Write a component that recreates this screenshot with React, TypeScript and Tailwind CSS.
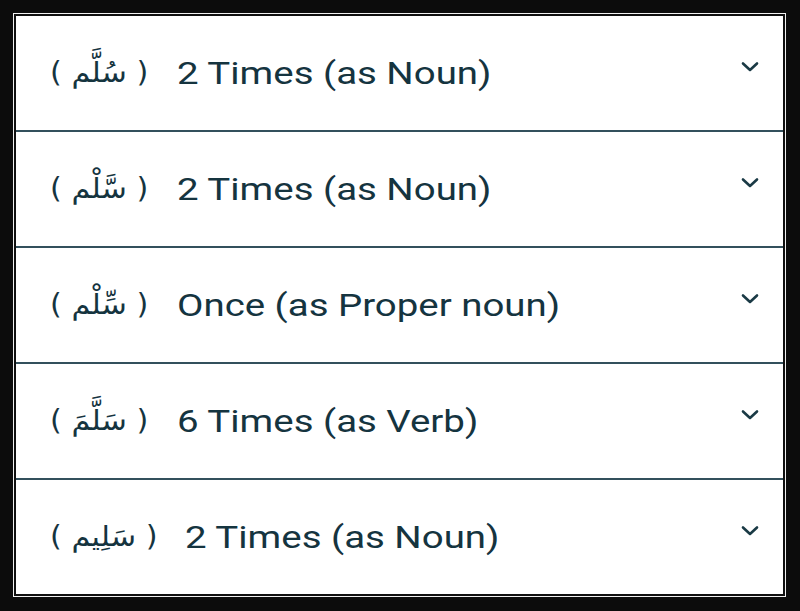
import React from "react";

const rows = [
  { ar: "سُلَّم", text: "2 Times (as Noun)" },
  { ar: "سَّلْم", text: "2 Times (as Noun)" },
  { ar: "سِّلْم", text: "Once (as Proper noun)" },
  { ar: "سَلَّمَ", text: "6 Times (as Verb)" },
  { ar: "سَلِيم", text: "2 Times (as Noun)" },
];

function Chevron() {
  return (
    <svg width="18" height="12" viewBox="0 0 18 12" className="shrink-0">
      <path d="M2 2.5 L9 9 L16 2.5" fill="none" stroke="#1a3a45" strokeWidth="2.6" strokeLinecap="round" strokeLinejoin="round" />
    </svg>
  );
}

export default function App() {
  return (
    <div className="w-[800px] h-[611px] bg-[#0c0c0c] pt-[13px] pl-[13px] overflow-hidden">
      <div className="w-[773px] h-[584px] border border-[#f2f2f2]">
        <div className="w-full h-full border-2 border-[#101010] bg-white flex flex-col overflow-hidden">
          {rows.map((r, i) => (
            <div
              key={i}
              className={`flex-1 flex items-center pl-[34px] pr-[24px] ${i < rows.length - 1 ? "border-b-2 border-[#33505c]" : ""}`}
            >
              <span
                className="text-[28px] text-[#15343f] whitespace-pre mr-[36px] scale-x-[1.08] origin-left"
                style={{ fontFamily: '"DejaVu Sans", sans-serif' }}
              >
                {"( " + r.ar + " )"}
              </span>
              <span
                className="flex-1 text-[32px] text-[#15343f] whitespace-nowrap origin-left scale-x-[1.2]"
                style={{ fontFamily: "Roboto, sans-serif" }}
              >
                {r.text}
              </span>
              <div className="-mt-[12px]">
                <Chevron />
              </div>
            </div>
          ))}
        </div>
      </div>
    </div>
  );
}
